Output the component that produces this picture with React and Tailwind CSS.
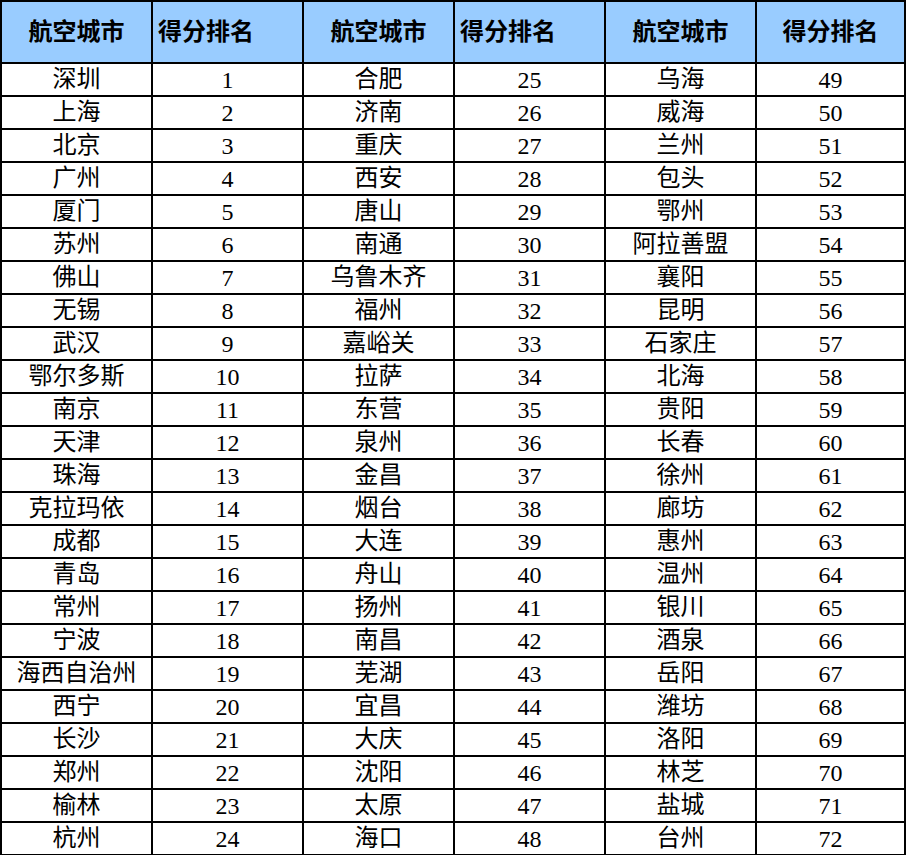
const cities = [
  '深圳', '上海', '北京', '广州', '厦门', '苏州', '佛山', '无锡', '武汉', '鄂尔多斯', '南京', '天津',
  '珠海', '克拉玛依', '成都', '青岛', '常州', '宁波', '海西自治州', '西宁', '长沙', '郑州', '榆林', '杭州',
  '合肥', '济南', '重庆', '西安', '唐山', '南通', '乌鲁木齐', '福州', '嘉峪关', '拉萨', '东营', '泉州',
  '金昌', '烟台', '大连', '舟山', '扬州', '南昌', '芜湖', '宜昌', '大庆', '沈阳', '太原', '海口',
  '乌海', '威海', '兰州', '包头', '鄂州', '阿拉善盟', '襄阳', '昆明', '石家庄', '北海', '贵阳', '长春',
  '徐州', '廊坊', '惠州', '温州', '银川', '酒泉', '岳阳', '潍坊', '洛阳', '林芝', '盐城', '台州',
];

const rows = Array.from({ length: 24 }, (_, i) => [0, 1, 2].map((g) => ({
  city: cities[g * 24 + i],
  rank: g * 24 + i + 1,
})));

const cell = 'border-2 border-black p-0 text-center';

export default function App() {
  return (
    <div className="w-[907px] h-[855px] bg-white font-['Liberation_Serif','Noto_Sans_CJK_SC',serif] text-black">
      <table className="table-fixed border-collapse w-[904px]">
        <colgroup>
          <col className="w-[151px]" />
          <col className="w-[151px]" />
          <col className="w-[151px]" />
          <col className="w-[151px]" />
          <col className="w-[151px]" />
          <col className="w-[149px]" />
        </colgroup>
        <thead>
          <tr className="h-[62px] bg-[#99ccff]">
            <th className={`${cell} text-[24px] font-bold`}>航空城市</th>
            <th className="border-2 border-black p-0 pl-[5px] text-left text-[24px] font-bold">得分排名</th>
            <th className={`${cell} text-[24px] font-bold`}>航空城市</th>
            <th className="border-2 border-black p-0 pl-[5px] text-left text-[24px] font-bold">得分排名</th>
            <th className={`${cell} text-[24px] font-bold`}>航空城市</th>
            <th className={`${cell} text-[24px] font-bold`}>得分排名</th>
          </tr>
        </thead>
        <tbody>
          {rows.map((r, i) => (
            <tr key={i} className="h-[33px]">
              {r.map((c) => (
                <>
                  <td key={`c${c.rank}`} className={`${cell} text-[24px] leading-[31px]`}>{c.city}</td>
                  <td key={`r${c.rank}`} className={`${cell} text-[24px] leading-[29px] pt-[2px]`}>{c.rank}</td>
                </>
              ))}
            </tr>
          ))}
        </tbody>
      </table>
    </div>
  );
}
